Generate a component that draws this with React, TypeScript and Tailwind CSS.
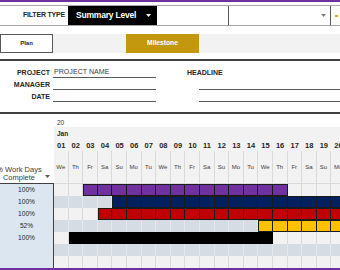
import React from 'react';

const days = ['We', 'Th', 'Fr', 'Sa', 'Su', 'Mo', 'Tu', 'We', 'Th', 'Fr', 'Sa', 'Su', 'Mo', 'Tu', 'We', 'Th', 'Fr', 'Sa', 'Su', 'Mo'];
const COL = 14.6;

type Row = {
  pct: string;
  shade: 'light' | 'gray';
  bar?: { from: number; to: number; color: string; solid?: boolean };
};

const rows: Row[] = [
  { pct: '100%', shade: 'light', bar: { from: 2, to: 15, color: '#7030a0' } },
  { pct: '100%', shade: 'gray', bar: { from: 4, to: 19, color: '#002060' } },
  { pct: '100%', shade: 'light', bar: { from: 3, to: 19, color: '#c00000' } },
  { pct: '52%', shade: 'gray', bar: { from: 14, to: 19, color: '#ffc000' } },
  { pct: '100%', shade: 'light', bar: { from: 1, to: 14, color: '#000000', solid: true } },
  { pct: '', shade: 'gray' },
  { pct: '', shade: 'light' },
];

const Caret = ({ className }: { className: string }) => (
  <svg width="5" height="3" viewBox="0 0 5 3" className={className}>
    <path d="M0 0h5L2.5 3z" fill="currentColor" />
  </svg>
);

const GanttRow: React.FC<{ row: Row }> = ({ row }) => {
  const bg = row.shade === 'light' ? 'bg-[#f2f2f2]' : 'bg-[#d6dce4]';
  const line = row.shade === 'light' ? 'border-[#d9d9d9]' : 'border-[#e4e7eb]';
  const cells: React.ReactNode[] = [];
  for (let i = 0; i < days.length; i++) {
    const b = row.bar;
    if (b && b.solid && i === b.from) {
      cells.push(
        <div
          key={i}
          className="h-full shrink-0 bg-black"
          style={{ width: (b.to - b.from + 1) * COL }}
        />
      );
      i = b.to;
      continue;
    }
    if (b && i >= b.from && i <= b.to) {
      cells.push(
        <div
          key={i}
          className={`h-full w-[14.6px] shrink-0 border-y border-r border-[#1a1a1a] ${i === b.from ? 'border-l' : ''}`}
          style={{ backgroundColor: b.color }}
        />
      );
    } else {
      cells.push(<div key={i} className={`h-full w-[14.6px] shrink-0 border-r ${line}`} />);
    }
  }
  return (
    <div className="flex h-[12px]">
      <div className="flex w-[54px] shrink-0 items-center justify-center border-r border-[#404040] bg-[#dce6f1] text-[6.6px] leading-none text-[#262626]">
        {row.pct}
      </div>
      <div className={`flex ${bg}`}>{cells}</div>
    </div>
  );
};

export default function App() {
  return (
    <div className="relative h-[270px] w-[340px] overflow-hidden bg-white font-['Liberation_Sans',Arial,sans-serif] text-[#262626]">
      <div className="h-[2px] bg-[#7030a0]" />

      {/* filter row */}
      <div className="mt-[3px] flex h-[21px] border-y border-[#a6a6a6]">
        <div className="flex w-[68px] shrink-0 items-center justify-end pr-[3px] text-[7px] font-bold tracking-[-0.2px]">
          FILTER TYPE
        </div>
        <div className="flex w-[89px] shrink-0 items-center justify-between bg-black pl-[8px] pr-[6px]">
          <span className="text-[8.5px] font-bold leading-none tracking-[-0.2px] text-white">Summary Level</span>
          <Caret className="text-white" />
        </div>
        <div className="w-[72px] shrink-0 border-r border-[#595959]" />
        <div className="flex w-[102px] shrink-0 items-center justify-end border-r border-[#595959] pr-[4px]">
          <Caret className="text-[#7f7f7f]" />
        </div>
        <div className="flex items-center pl-[4px]">
          <div className="h-[2px] w-[3px] bg-[#e5a823]" />
        </div>
      </div>

      {/* view buttons */}
      <div className="mt-[8px] flex h-[19px] bg-[#f2f2f2]">
        <div className="flex w-[53px] shrink-0 items-center justify-center border border-[#595959] bg-white text-[6px] font-bold">
          Plan
        </div>
        <div className="w-[73px] shrink-0" />
        <div className="flex w-[73px] shrink-0 items-center justify-center bg-[#c3980f] text-[6.7px] font-bold text-white">
          Milestone
        </div>
      </div>

      <div className="mt-[6px] h-[2px] bg-[#404040]" />

      {/* project info */}
      <div className="flex h-[51px] pt-[5px] text-[7px] leading-[10px]">
        <div className="flex w-[156px] shrink-0 flex-col">
          {[
            ['PROJECT', 'PROJECT NAME'],
            ['MANAGER', ''],
            ['DATE', ''],
          ].map(([label, value]) => (
            <div key={label} className="flex h-[12px] items-end">
              <div className="w-[50px] shrink-0 text-right font-bold">{label}</div>
              <div className="ml-[3px] h-[11px] flex-1 border-b border-[#595959] pl-[1px] text-[7.1px] text-[#404040]">
                {value}
              </div>
            </div>
          ))}
        </div>
        <div className="ml-[31px] flex flex-1 flex-col">
          <div className="flex h-[12px] items-end font-bold">HEADLINE</div>
          <div className="ml-[12px] h-[12px] border-b border-[#595959]" />
          <div className="ml-[12px] h-[12px] border-b border-[#595959]" />
        </div>
      </div>

      <div className="h-[2px] bg-[#404040]" />

      {/* gantt header */}
      <div className="flex h-[70px]">
        <div className="relative flex w-[54px] shrink-0 flex-col justify-end border-b border-[#404040] pb-[1px]">
          <div className="-ml-[3px] w-[44px] whitespace-nowrap text-center text-[7.5px] leading-[8px] text-[#404040]">
            <div className="-mx-[4px]">% Work Days</div>
            <div>Complete</div>
          </div>
          <Caret className="absolute bottom-[5px] left-[45px] text-[#595959]" />
        </div>
        <div className="flex flex-1 flex-col">
          <div className="flex h-[13px] items-end pl-[3px] text-[6.5px] leading-[8px] text-[#404040]">20</div>
          <div className="flex flex-1 flex-col border-b border-[#d9d9d9] bg-[#f2f2f2]">
            <div className="flex h-[14px] items-center pl-[3px] text-[6.5px] font-bold">Jan</div>
            <div className="flex h-[10px]">
              {days.map((_, i) => (
                <div key={i} className="w-[14.6px] shrink-0 pl-[3px] text-[7.5px] font-bold leading-[10px]">
                  {String(i + 1).padStart(2, '0')}
                </div>
              ))}
            </div>
            <div className="flex flex-1">
              {days.map((d, i) => (
                <div
                  key={i}
                  className="flex w-[14.6px] shrink-0 items-center justify-center border-r border-[#d9d9d9] text-[6px] text-[#404040]"
                >
                  {d}
                </div>
              ))}
            </div>
          </div>
        </div>
      </div>

      {rows.map((r, i) => (
        <GanttRow key={i} row={r} />
      ))}

      <div className="h-[3px] bg-[#7030a0]" />
    </div>
  );
}
